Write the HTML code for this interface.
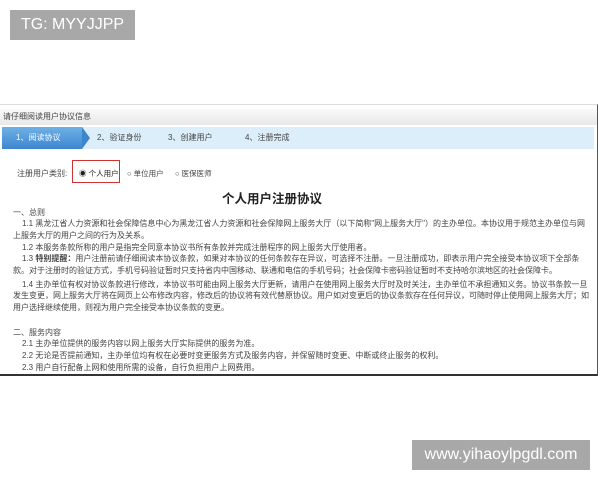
<!DOCTYPE html>
<html><head><meta charset="utf-8"><style>
body{margin:0;width:600px;height:480px;background:#fff;position:relative;overflow:hidden;font-family:"Liberation Sans","Noto Sans CJK SC",sans-serif}
.tg{position:absolute;left:10px;top:10px;width:125px;height:30px;background:#a8a8a8;color:#fff;font-size:16px;line-height:30px;text-align:center}
.ws{position:absolute;left:412px;top:440px;width:178px;height:30px;background:#a8a8a8;color:#fff;font-size:16px;line-height:30px;text-align:center}
.shot{position:absolute;left:0;top:104px;width:597px;height:269px;border-right:1px solid #555;border-bottom:2px solid #333;border-top:1px solid #ddd}
.hdr{position:absolute;left:0;top:4px;width:597px;height:16px;background:linear-gradient(#fafafa,#e8e8e8);font-size:8px;line-height:16px;color:#444;padding-left:3px;box-sizing:border-box}
.steps{position:absolute;left:2px;top:22px;width:592px;height:22px;background:#dceefa}
.steps div{position:absolute;top:0;font-size:8px;line-height:22px;color:#444}
.s1{left:0;width:80px;height:22px;background:linear-gradient(#6fb0e6,#3d86cf);color:#fff!important;padding-left:14px;box-sizing:border-box}
.arrow{position:absolute;top:0;width:0;height:0;border-top:11px solid transparent;border-bottom:11px solid transparent}
.t{position:absolute;font-size:8px;line-height:12px;color:#444;white-space:nowrap}
.red{position:absolute;left:72px;top:55px;width:46px;height:21px;border:1px solid #c33}
</style></head><body>
<div class="tg">TG: MYYJJPP</div>
<div class="shot">
<div class="hdr">请仔细阅读用户协议信息</div>
<div class="steps">
<div class="s1">1、阅读协议</div>
<div class="arrow" style="left:80px;border-left:8px solid #3d86cf"></div>
<div style="left:95px">2、验证身份</div>
<div style="left:166px">3、创建用户</div>
<div style="left:243px">4、注册完成</div>
</div>
<div class="red"></div>
<div class="t" style="left:17px;top:63px">注册用户类别:</div>
<div class="t" style="left:79px;top:63px;color:#222;font-size:7.5px">◉ 个人用户</div>
<div class="t" style="left:127px;top:63px;font-size:7.5px">○ 单位用户</div>
<div class="t" style="left:175px;top:63px;font-size:7.5px">○ 医保医师</div>
<div class="t" style="left:222px;top:86px;font-size:12.5px;line-height:16px;font-weight:bold;color:#222">个人用户注册协议</div>
<div class="t" style="left:13px;top:102px">一、总则</div>
<div class="t" style="left:22px;top:113px">1.1 黑龙江省人力资源和社会保障信息中心为黑龙江省人力资源和社会保障网上服务大厅（以下简称"网上服务大厅"）的主办单位。本协议用于规范主办单位与网</div>
<div class="t" style="left:13px;top:125px">上服务大厅的用户之间的行为及关系。</div>
<div class="t" style="left:22px;top:137px">1.2 本服务条款所称的用户是指完全同意本协议书所有条款并完成注册程序的网上服务大厅使用者。</div>
<div class="t" style="left:22px;top:148px">1.3 <b>特别提醒：</b>用户注册前请仔细阅读本协议条款，如果对本协议的任何条款存在异议，可选择不注册。一旦注册成功，即表示用户完全接受本协议项下全部条</div>
<div class="t" style="left:13px;top:160px">款。对于注册时的验证方式，手机号码验证暂时只支持省内中国移动、联通和电信的手机号码；社会保障卡密码验证暂时不支持哈尔滨地区的社会保障卡。</div>
<div class="t" style="left:22px;top:174px">1.4 主办单位有权对协议条款进行修改，本协议书可能由网上服务大厅更新，请用户在使用网上服务大厅时及时关注，主办单位不承担通知义务。协议书条款一旦</div>
<div class="t" style="left:13px;top:185px">发生变更，网上服务大厅将在网页上公布修改内容，修改后的协议将有效代替原协议。用户如对变更后的协议条款存在任何异议，可随时停止使用网上服务大厅；如</div>
<div class="t" style="left:13px;top:197px">用户选择继续使用，则视为用户完全接受本协议条款的变更。</div>
<div class="t" style="left:13px;top:222px">二、服务内容</div>
<div class="t" style="left:22px;top:233px">2.1 主办单位提供的服务内容以网上服务大厅实际提供的服务为准。</div>
<div class="t" style="left:22px;top:245px">2.2 无论是否提前通知，主办单位均有权在必要时变更服务方式及服务内容，并保留随时变更、中断或终止服务的权利。</div>
<div class="t" style="left:22px;top:257px">2.3 用户自行配备上网和使用所需的设备，自行负担用户上网费用。</div>
</div>
<div class="ws">www.yihaoylpgdl.com</div>
</body></html>
